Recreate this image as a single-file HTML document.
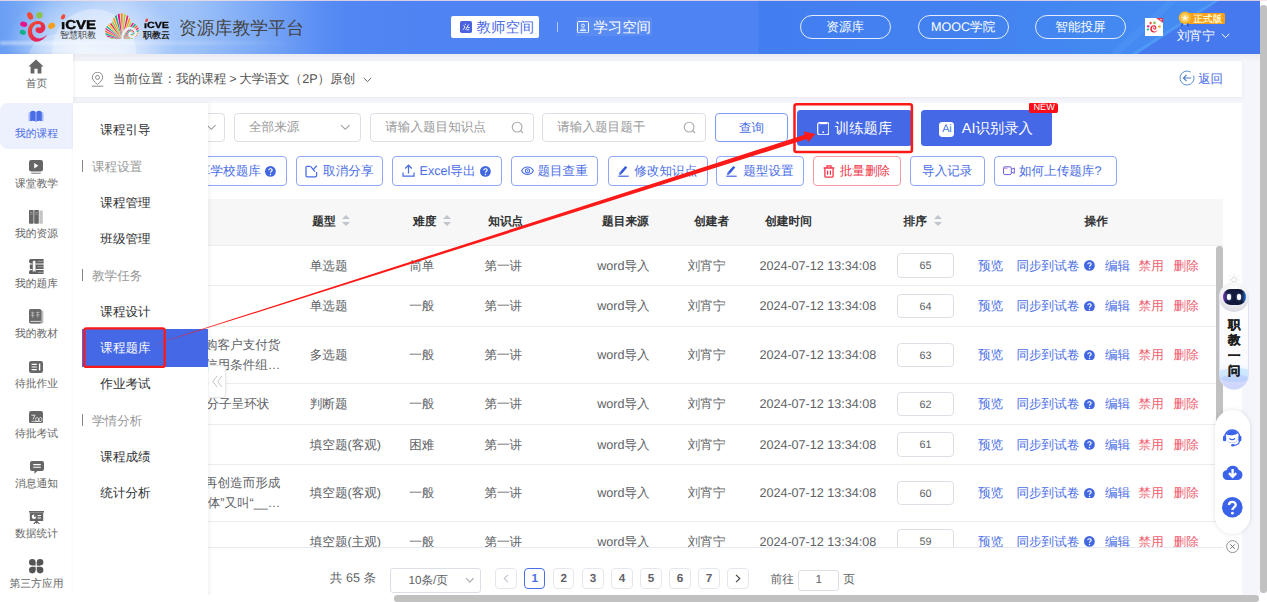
<!DOCTYPE html>
<html lang="zh"><head><meta charset="utf-8"><title>资源库教学平台</title><style>
*{box-sizing:border-box;margin:0;padding:0}
html,body{width:1267px;height:602px;overflow:hidden;background:#fff}
body{font-family:"Liberation Sans",sans-serif;font-size:12.6px;color:#606266;-webkit-font-smoothing:antialiased;text-rendering:geometricPrecision}
#root{position:relative;width:1267px;height:602px;overflow:hidden;background:#f4f6fb}
.abs{position:absolute}
.t{position:absolute;white-space:nowrap;line-height:1}
/* header */
#hdr{position:absolute;left:0;top:0;width:1260px;height:53.5px;background:radial-gradient(ellipse 85px 60px at 92px 44px,rgba(255,255,255,.62) 0,rgba(255,255,255,.45) 45%,rgba(255,255,255,0) 100%),radial-gradient(ellipse 70px 22px at 95px 56px,rgba(255,255,255,.5) 0,rgba(255,255,255,0) 100%),linear-gradient(90deg,#6a9ef4 0px,#88b6f7 50px,#accbfa 120px,#9fc3f9 190px,#7aa8f6 260px,#5a8ef3 320px,#5186f3 350px,#4f83f3 420px,#4d83f3 758px,#437ef0 759px,#4381f0 950px,#448af2 1130px,#448bf2 1260px);overflow:hidden}
.pill{position:absolute;top:15.2px;height:23.4px;width:91px;border:1px solid rgba(255,255,255,.85);border-radius:12px;color:#fff;font-size:12.6px;text-align:center;line-height:22.4px}
/* sidebar */
#side{position:absolute;left:0;top:53.5px;width:73px;height:549px;background:#fff;box-shadow:1px 0 4px rgba(0,0,0,.06)}
.si{position:absolute;left:0;width:73px;text-align:center;font-size:10.8px;color:#666;line-height:1}
/* breadcrumb */
#bc{position:absolute;left:73px;top:61px;width:1169px;height:36px;background:#fff;box-shadow:0 1px 4px rgba(0,0,0,.05)}
#panel{position:absolute;left:73px;top:103px;width:1168.6px;height:499px;background:#fff}
.inp{position:absolute;top:113px;height:28.6px;border:1px solid #dcdfe6;border-radius:4px;background:#fff;color:#999;font-size:12.6px;line-height:26px}
.btn{position:absolute;top:156px;height:30px;border:1px solid #8fa8f6;border-radius:4px;background:#fff;color:#4a6ee6;font-size:12.6px;line-height:29.4px;white-space:nowrap}
.th{position:absolute;top:214.6px;font-size:11.7px;font-weight:bold;color:#303133;line-height:13px;white-space:nowrap}
.td{position:absolute;font-size:12.6px;color:#606266;line-height:14px;white-space:nowrap}
.lk{color:#4a6ee6}.rd{color:#f25c6e}
.row{position:absolute;left:73px;width:1150.3px;border-bottom:1px solid #ebecf0}
.caret{position:absolute;width:0;height:0;border-left:4px solid transparent;border-right:4px solid transparent}
.pg{position:absolute;top:568px;width:21.4px;height:21.4px;border:1px solid #e4e7ed;border-radius:4px;background:#fff;text-align:center;font-size:11.7px;line-height:19.6px;color:#606266;font-weight:bold}
.mi{position:absolute;left:100.3px;font-size:12.6px;color:#303133;line-height:14px;white-space:nowrap}
.mg{position:absolute;left:92px;font-size:12.6px;color:#999;line-height:14px;white-space:nowrap}
.mgb{position:absolute;left:82.2px;width:1px;height:12px;background:#888}
</style></head><body><div id="root">
<div id="hdr">
<div class="abs" style="left:52px;top:9px;width:84px;height:84px;border-radius:50%;background:rgba(255,255,255,.30)"></div>
<div class="abs" style="left:28px;top:34px;width:64px;height:50px;border-radius:50%;background:rgba(255,255,255,.22)"></div>
<div class="abs" style="left:0;top:40.5px;width:300px;height:4px;background:linear-gradient(90deg,rgba(255,255,255,.38),rgba(255,255,255,.22) 50%,rgba(255,255,255,0));filter:blur(1.2px)"></div>
<svg class="abs" style="left:1060px;top:0" width="200" height="54" viewBox="0 0 200 54"><path d="M77 54 L160 0 L200 0 L200 54 Z" fill="#4679ee"/><path d="M50 54 L108 0 L118 0 L60 54 Z" fill="rgba(90,160,250,.3)"/><path d="M71 54 L155 0 L160 0 L77 54 Z" fill="rgba(90,165,250,.5)"/></svg>
<svg class="abs" style="left:0;top:0" width="180" height="54" viewBox="0 0 180 54"><defs><linearGradient id="eg" x1="0" y1="0" x2="1" y2="1"><stop offset="0" stop-color="#f4562a"/><stop offset=".55" stop-color="#e82a4c"/><stop offset="1" stop-color="#e0207a"/></linearGradient><clipPath id="sc"><circle cx="113.2" cy="31" r="8.1"/><circle cx="121.6" cy="22.6" r="9.3"/><circle cx="131" cy="30.6" r="7.9"/><rect x="111" y="30" width="22" height="9.1"/></clipPath></defs><ellipse cx="30.1" cy="15.9" rx="2.7" ry="3.9" transform="rotate(-28 30.1 15.9)" fill="#f24a38"/><circle cx="39.4" cy="15.2" r="3.2" fill="#8dc24f"/><ellipse cx="23.7" cy="24.2" rx="3.6" ry="2.6" transform="rotate(12 23.7 24.2)" fill="#e5138c"/><ellipse cx="22.8" cy="32.3" rx="3.1" ry="2.4" transform="rotate(22 22.8 32.3)" fill="#12b08a"/><ellipse cx="51.6" cy="25.8" rx="3.6" ry="2.9" transform="rotate(-28 51.6 25.8)" fill="#f5a01a"/><path d="M47.3 34.6 C44 40 39 42.5 35 41.5 C29 40 26.5 33 28.5 27.5 C30 23 34.5 20.8 38.5 21 C43 21.3 45.8 24.5 45.3 28 C44.9 31.5 41.5 33.8 38.5 33.2 C36 32.7 34.8 30.3 35.8 28.6 C36.8 27 39 27 40.5 27.8 C41.5 26 41 24.2 38.6 24 C34.5 23.8 31.8 27.5 32 31.5 C32.3 36 36 38.6 39.5 38.4 C42.5 38.2 45 36.8 47.3 34.6 Z" fill="url(#eg)"/><ellipse cx="63.1" cy="16.9" rx="1.9" ry="2.8" transform="rotate(28 63.1 16.9)" fill="#f24a38"/><g clip-path="url(#sc)"><rect x="100" y="10" width="44" height="32" fill="#f3f6fb"/><path d="M122.2 39.6 L88.28 41.97 L88.20 39.08 Z" fill="#f59a1c"/><path d="M122.2 39.6 L88.25 37.84 L88.52 34.96 Z" fill="#9ccc52"/><path d="M122.2 39.6 L88.71 33.74 L89.33 30.91 Z" fill="#e61a8a"/><path d="M122.2 39.6 L89.67 29.72 L90.62 26.99 Z" fill="#17a98a"/><path d="M122.2 39.6 L91.10 25.85 L92.38 23.26 Z" fill="#f4642c"/><path d="M122.2 39.6 L93.00 22.18 L94.59 19.76 Z" fill="#ec2f7c"/><path d="M122.2 39.6 L95.33 18.77 L97.19 16.56 Z" fill="#2bb29a"/><path d="M122.2 39.6 L98.05 15.67 L100.17 13.70 Z" fill="#f7b52a"/><path d="M122.2 39.6 L101.13 12.92 L103.47 11.22 Z" fill="#e8283c"/><path d="M122.2 39.6 L104.52 10.56 L107.05 9.16 Z" fill="#8dc24f"/><path d="M122.2 39.6 L108.17 8.63 L110.85 7.55 Z" fill="#f59a1c"/><path d="M122.2 39.6 L112.03 7.16 L114.82 6.41 Z" fill="#19a58c"/><path d="M122.2 39.6 L116.04 6.16 L118.90 5.76 Z" fill="#e5138c"/><path d="M122.2 39.6 L120.14 5.66 L123.03 5.61 Z" fill="#f28a1e"/><path d="M122.2 39.6 L124.26 5.66 L127.14 5.96 Z" fill="#a3cf58"/><path d="M122.2 39.6 L128.36 6.16 L131.18 6.81 Z" fill="#ea2a6e"/><path d="M122.2 39.6 L132.37 7.16 L135.09 8.14 Z" fill="#f59a1c"/><path d="M122.2 39.6 L136.23 8.63 L138.81 9.93 Z" fill="#9ccc52"/><path d="M122.2 39.6 L139.88 10.56 L142.28 12.17 Z" fill="#e61a8a"/><path d="M122.2 39.6 L143.27 12.92 L145.46 14.80 Z" fill="#17a98a"/><path d="M122.2 39.6 L146.35 15.67 L148.30 17.81 Z" fill="#f4642c"/><path d="M122.2 39.6 L149.07 18.77 L150.75 21.13 Z" fill="#ec2f7c"/><path d="M122.2 39.6 L151.40 22.18 L152.77 24.73 Z" fill="#2bb29a"/><path d="M122.2 39.6 L153.30 25.85 L154.35 28.54 Z" fill="#f7b52a"/><path d="M122.2 39.6 L154.73 29.72 L155.46 32.52 Z" fill="#e8283c"/><path d="M122.2 39.6 L155.69 33.74 L156.07 36.61 Z" fill="#8dc24f"/><path d="M122.2 39.6 L156.15 37.84 L156.18 40.73 Z" fill="#f59a1c"/></g><path d="M122.4 39.3 C121.6 34 125 28.2 130.2 28.2 C134.6 28.2 136.8 32 135.2 35.2 C134 37.5 130.6 37.6 129.6 35.4 C128.9 33.8 130.2 32.4 131.6 32.8" fill="none" stroke="#eaf1fc" stroke-width="2.3" stroke-linecap="round"/><ellipse cx="146.6" cy="20.3" rx="1.3" ry="1.9" transform="rotate(28 146.6 20.3)" fill="#f24a38"/></svg>
<div class="t" style="left:60.6px;top:18.7px;font-size:12.9px;font-weight:bold;color:#0a0a0a;-webkit-text-stroke:.45px #0a0a0a;transform:scaleX(1.165);transform-origin:0 0">ıCVE</div>
<div class="t" style="left:60px;top:31.4px;font-size:9px;color:#333">智慧职教</div>
<div class="t" style="left:143.6px;top:21.4px;font-size:8.9px;font-weight:bold;color:#0a0a0a;-webkit-text-stroke:.3px #0a0a0a;transform:scaleX(1.2);transform-origin:0 0">ıCVE</div>
<div class="t" style="left:143px;top:30.8px;font-size:9px;font-weight:bold;color:#222">职教云</div>
<div class="t" style="left:178.8px;top:19.6px;font-size:17.9px;color:#444">资源库教学平台</div>
<div class="abs" style="left:450.8px;top:15.9px;width:88.4px;height:22.5px;background:#fff;border-radius:2px"></div>
<svg class="abs" style="left:459.5px;top:21.3px" width="12" height="12" viewBox="0 0 12 12"><rect width="12" height="12" rx="1.8" fill="#4a62e0"/><path d="M3 8.8 L5 6 L3.6 4.3 M4.8 3.3 L6 3.3 M5.6 8.8 L8.6 3.6 M6.6 8.8 L9.2 8.8 M7.4 6.6 L9.6 6.6" stroke="#fff" stroke-width=".9" fill="none"/></svg>
<div class="t" style="left:476.6px;top:21px;font-size:14.4px;color:#4a6ce6">教师空间</div>
<div class="abs" style="left:557px;top:22px;width:1px;height:10px;background:rgba(255,255,255,.55)"></div>
<svg class="abs" style="left:576.5px;top:21px" width="12" height="12.4" viewBox="0 0 12 12.4"><rect x=".5" y=".5" width="11" height="11.4" rx="1.2" fill="none" stroke="#fff" stroke-width="1"/><circle cx="6" cy="4.6" r="1.5" fill="none" stroke="#fff" stroke-width=".9"/><path d="M3.3 9.6 C3.6 7.4 8.4 7.4 8.7 9.6 Z" fill="none" stroke="#fff" stroke-width=".9"/></svg>
<div class="abs" style="left:576px;top:17px;width:76px;height:19px;background:rgba(255,255,255,.07)"></div>
<div class="t" style="left:593.4px;top:21px;font-size:14.4px;color:#fff">学习空间</div>
<div class="pill" style="left:799.7px">资源库</div>
<div class="pill" style="left:917.6px">MOOC学院</div>
<div class="pill" style="left:1035px">智能投屏</div>
<div class="abs" style="left:1145px;top:18px;width:18px;height:18px;background:#fff"></div>
<svg class="abs" style="left:1146px;top:19.5px" width="16" height="15" viewBox="0 0 40 34">
<ellipse cx="11.5" cy="5.8" rx="2.8" ry="3.8" fill="#f04a3c"/><circle cx="21.3" cy="5.3" r="3.4" fill="#8cc152"/><ellipse cx="5.5" cy="14" rx="3.6" ry="2.7" fill="#e6178c"/><ellipse cx="4.8" cy="22.2" rx="3.2" ry="2.5" fill="#14b48c"/><ellipse cx="33.6" cy="15" rx="3.6" ry="2.9" fill="#f5a01e"/>
<path d="M29 23 C26 29.5 16 32.5 12.2 26 C8.2 19 13 11.3 19.5 11.5 C25 11.7 27.5 16.5 25.3 20.2 C23.5 23.3 18.6 23 17.8 19.8 C17.2 17.4 19.3 15.8 21 16.6 C19 17.6 19.7 20.5 21.8 19.8 C24 19 23 14.6 19.3 14.6 C15 14.6 13.2 20 15.8 24 C18.8 28.6 25.5 27 29 23 Z" fill="#e8283c"/></svg>
<svg class="abs" style="left:1156px;top:18px" width="7" height="5" viewBox="0 0 7 5"><path d="M0 0 L7 0 L7 5 Z" fill="#e0364f"/><circle cx="5" cy="1.7" r=".7" fill="#fff"/></svg>
<div class="abs" style="left:1186px;top:13.3px;width:39px;height:10.5px;background:#f7a11a;border-radius:1.5px"></div>
<div class="t" style="left:1193.4px;top:13.9px;font-size:9.4px;color:#fff5c8;font-weight:bold;letter-spacing:.3px">正式版</div>
<svg class="abs" style="left:1177.5px;top:10.5px" width="14" height="16" viewBox="0 0 14 16"><path d="M4 10.5 L3 15.8 L7 13.8 L11 15.8 L10 10.5 Z" fill="#2458d6"/><path d="M5.6 11 L5.2 14.6 L7 13.7 L8.8 14.6 L8.4 11 Z" fill="#a8cdf8"/><circle cx="7" cy="6.8" r="6.2" fill="#f9b62c"/><circle cx="7" cy="6.8" r="4.2" fill="#fbd065"/><path d="M7 3.8 L7.9 5.8 L10 6 L8.4 7.4 L8.9 9.5 L7 8.4 L5.1 9.5 L5.6 7.4 L4 6 L6.1 5.8 Z" fill="#fff6d8"/></svg>
<div class="t" style="left:1177px;top:30.2px;font-size:12.6px;color:#fff">刘宵宁</div>
<svg class="abs" style="left:1220.5px;top:33px" width="9" height="6" viewBox="0 0 9 6"><path d="M.8 1 L4.5 4.6 L8.2 1" fill="none" stroke="#fff" stroke-width="1"/></svg>
</div>
<div class="abs" style="left:0;top:53.5px;width:1260px;height:8px;background:linear-gradient(180deg,rgba(0,0,0,.045),rgba(0,0,0,0))"></div>
<div id="bc"></div>
<svg class="abs" style="left:91px;top:71.5px" width="13" height="15" viewBox="0 0 13 15"><path d="M6.5 12.6 C3.6 9.6 1.3 7.8 1.3 5.4 A5.2 5.2 0 0 1 11.7 5.4 C11.7 7.8 9.4 9.6 6.5 12.6 Z" fill="none" stroke="#8a8a8a" stroke-width="1"/><circle cx="6.5" cy="5.4" r="2" fill="none" stroke="#8a8a8a" stroke-width="1"/><path d="M.8 14.2 L12.2 14.2" stroke="#8a8a8a" stroke-width="1"/></svg>
<div class="t" style="left:113px;top:73px;font-size:12.6px;color:#555">当前位置：我的课程<span style="padding:0 2.5px 0 3px">&gt;</span>大学语文（2P）原创</div>
<svg class="abs" style="left:363px;top:77px" width="9" height="6" viewBox="0 0 9 6"><path d="M.8 1 L4.5 4.6 L8.2 1" fill="none" stroke="#666" stroke-width="1"/></svg>
<svg class="abs" style="left:1178.6px;top:70.2px" width="16" height="16" viewBox="0 0 16 16"><path d="M11.6 2 A7 7 0 1 0 14.6 5.6" fill="none" stroke="#5a8fd0" stroke-width="1"/><path d="M12.2 8 L4.6 8 M7.6 4.8 L4.4 8 L7.6 11.2" fill="none" stroke="#4f7fc8" stroke-width="1.1"/></svg>
<div class="t" style="left:1198.2px;top:73.2px;font-size:12.4px;color:#4a6ee6">返回</div>
<div id="panel"></div>
<div class="inp" style="left:120px;width:104.5px"></div>
<svg class="abs" style="left:206.4px;top:123.8px" width="10.6" height="7" viewBox="0 0 9 6"><path d="M.8 1 L4.5 4.6 L8.2 1" fill="none" stroke="#9a9a9a" stroke-width=".9"/></svg>
<div class="inp" style="left:234px;width:127px;padding-left:14px">全部来源</div>
<svg class="abs" style="left:340px;top:123.8px" width="10.6" height="7" viewBox="0 0 9 6"><path d="M.8 1 L4.5 4.6 L8.2 1" fill="none" stroke="#9a9a9a" stroke-width=".9"/></svg>
<div class="inp" style="left:370.2px;width:163.6px;padding-left:14px">请输入题目知识点</div>
<div class="inp" style="left:542.2px;width:163.6px;padding-left:14px">请输入题目题干</div>
<svg class="abs" style="left:510.9px;top:120.6px" width="13.6" height="13.6" viewBox="0 0 12 12"><circle cx="5.4" cy="5.4" r="4.3" fill="none" stroke="#aaa" stroke-width="1"/><path d="M8.6 8.6 L10.6 10.6" stroke="#aaa" stroke-width="1"/></svg>
<svg class="abs" style="left:682.9px;top:120.6px" width="13.6" height="13.6" viewBox="0 0 12 12"><circle cx="5.4" cy="5.4" r="4.3" fill="none" stroke="#aaa" stroke-width="1"/><path d="M8.6 8.6 L10.6 10.6" stroke="#aaa" stroke-width="1"/></svg>
<div class="btn" style="top:113px;left:715px;width:73px;text-align:center;height:28.6px;line-height:28.8px;border-color:#7d9af5">查询</div>
<div class="abs" style="left:796.5px;top:109.5px;width:115px;height:36.5px;background:#4568e6;border-radius:3.5px"></div>
<svg class="abs" style="left:816.5px;top:121.6px" width="12.5" height="13.5" viewBox="0 0 12.5 13.5"><rect x=".7" y=".7" width="11.1" height="12.1" rx="2" fill="none" stroke="#fff" stroke-width="1.2"/><path d="M2.6 1.3 L9.9 1.3" stroke="#fff" stroke-width="1.8"/><circle cx="6.25" cy="10.2" r=".9" fill="#fff"/></svg>
<div class="t" style="left:834.8px;top:121.6px;font-size:14.4px;color:#fff">训练题库</div>
<div class="abs" style="left:920.7px;top:109.5px;width:131.3px;height:36.5px;background:#4568e6;border-radius:3.5px"></div>
<div class="abs" style="left:939px;top:122px;width:14.5px;height:14.7px;background:#fff;border-radius:3.4px"></div>
<div class="t" style="left:942.2px;top:124.1px;font-size:10.9px;color:#3f78e6;letter-spacing:-.3px">Ai</div>
<div class="t" style="left:961.8px;top:121.6px;font-size:14.4px;color:#fff">AI识别录入</div>
<div class="abs" style="left:1029.4px;top:102.8px;width:29px;height:10.6px;background:#fb0d17;border-radius:1px 2.6px 2.6px 2.6px"></div>
<div class="t" style="left:1033.4px;top:103.3px;font-size:9.2px;color:#fff;letter-spacing:0">NEW</div>
<div class="btn" style="left:160px;width:126.6px;padding-left:36.9px">享学校题库<svg style="display:inline-block;vertical-align:-1.6px;margin-left:4.5px" width="10.8" height="10.8" viewBox="0 0 12 12"><circle cx="6" cy="6" r="6" fill="#4166e2"/><path d="M4.2 4.7 C4.2 2.5 7.9 2.5 7.9 4.6 C7.9 6 6.1 5.9 6.1 7.4" fill="none" stroke="#fff" stroke-width="1.3"/><circle cx="6.1" cy="9.4" r=".85" fill="#fff"/></svg></div>
<div class="btn" style="left:295.5px;width:87.5px;padding-left:26.6px">取消分享</div>
<svg class="abs" style="left:304.8px;top:164.6px" width="13" height="13" viewBox="0 0 13 13"><path d="M5.4 1.3 L2.2 1.3 Q1 1.3 1 2.5 L1 10.6 Q1 11.8 2.2 11.8 L10.4 11.8 Q11.6 11.8 11.6 10.6 L11.6 7" fill="none" stroke="#4a6ee6" stroke-width="1.3"/><path d="M5.6 1.4 L10 6.6 M11.8 .8 L8.4 4.4" fill="none" stroke="#4a6ee6" stroke-width="1.3"/></svg>
<div class="btn" style="left:392.4px;width:109.4px;padding-left:26.2px">Excel导出<svg style="display:inline-block;vertical-align:-1.6px;margin-left:4.5px" width="10.8" height="10.8" viewBox="0 0 12 12"><circle cx="6" cy="6" r="6" fill="#4166e2"/><path d="M4.2 4.7 C4.2 2.5 7.9 2.5 7.9 4.6 C7.9 6 6.1 5.9 6.1 7.4" fill="none" stroke="#fff" stroke-width="1.3"/><circle cx="6.1" cy="9.4" r=".85" fill="#fff"/></svg></div>
<svg class="abs" style="left:401.6px;top:164px" width="13" height="13.5" viewBox="0 0 13 13.5"><path d="M6.5 9.4 L6.5 1.4 M3.2 4.5 L6.5 1.2 L9.8 4.5" fill="none" stroke="#4a6ee6" stroke-width="1.25"/><path d="M1 8.4 L1 12.2 L12 12.2 L12 8.4" fill="none" stroke="#4a6ee6" stroke-width="1.25"/></svg>
<div class="btn" style="left:510.6px;width:87.9px;padding-left:25.8px">题目查重</div>
<svg class="abs" style="left:520.6px;top:166.2px" width="13" height="9.6" viewBox="0 0 13 9.6"><path d="M.6 4.8 C3.2 -.2 9.8 -.2 12.4 4.8 C9.8 9.8 3.2 9.8 .6 4.8 Z" fill="none" stroke="#4a6ee6" stroke-width="1.1"/><circle cx="6.5" cy="4.8" r="2.1" fill="none" stroke="#4a6ee6" stroke-width="1.1"/><circle cx="6.5" cy="4.8" r=".7" fill="#4a6ee6"/></svg>
<div class="btn" style="left:607.8px;width:99.8px;padding-left:25.4px">修改知识点</div>
<svg class="abs" style="left:617.5px;top:165.2px" width="11" height="11.8" viewBox="0 0 11 11.8"><path d="M2.9 7.9 L8.3 1.7" stroke="#3558e0" stroke-width="2.5" fill="none"/><path d="M1.1 9.9 L1.6 6.9 L4.1 8.9 Z" fill="#3558e0"/><path d="M.3 11.2 L10.7 11.2" stroke="#3558e0" stroke-width="1.1"/></svg>
<div class="btn" style="left:716.4px;width:87.9px;padding-left:25.8px">题型设置</div>
<svg class="abs" style="left:726.3px;top:165.2px" width="11" height="11.8" viewBox="0 0 11 11.8"><path d="M2.9 7.9 L8.3 1.7" stroke="#3558e0" stroke-width="2.5" fill="none"/><path d="M1.1 9.9 L1.6 6.9 L4.1 8.9 Z" fill="#3558e0"/><path d="M.3 11.2 L10.7 11.2" stroke="#3558e0" stroke-width="1.1"/></svg>
<div class="btn" style="left:813.3px;width:87.4px;padding-left:25.4px;border-color:#f59aa3;color:#f0364a">批量删除</div>
<svg class="abs" style="left:822.8px;top:164.6px" width="12" height="13" viewBox="0 0 12 13"><path d="M.6 3 L11.4 3 M4 2.6 L4 .9 L8 .9 L8 2.6" fill="none" stroke="#f0364a" stroke-width="1.3"/><path d="M1.9 3.2 L1.9 11 Q1.9 12.2 3.1 12.2 L8.9 12.2 Q10.1 12.2 10.1 11 L10.1 3.2" fill="none" stroke="#f0364a" stroke-width="1.3"/><path d="M4.6 5.6 L4.6 9.8 M7.4 5.6 L7.4 9.8" stroke="#f0364a" stroke-width="1.2"/></svg>
<div class="btn" style="left:910px;width:74.5px;text-align:center">导入记录</div>
<div class="btn" style="left:993.7px;width:123px;padding-left:24.2px">如何上传题库?</div>
<svg class="abs" style="left:1002.6px;top:166.4px" width="12" height="9.4" viewBox="0 0 12 9.4"><rect x=".5" y=".8" width="7.8" height="7.8" rx="1.4" fill="none" stroke="#6a5ce0" stroke-width="1"/><path d="M8.5 3.3 L11.3 2 L11.3 7.4 L8.5 6.1" fill="none" stroke="#6a5ce0" stroke-width="1"/><path d="M1.2 2.2 L4.4 2.2" stroke="#c46ad8" stroke-width="1"/></svg>
<div class="abs" style="left:73px;top:199px;width:1150.3px;height:47px;background:#f7f7f7;border-bottom:1px solid #eeeeef"></div>
<div class="th" style="left:312.2px">题型</div>
<div class="th" style="left:413px">难度</div>
<div class="th" style="left:488.2px">知识点</div>
<div class="th" style="left:602px">题目来源</div>
<div class="th" style="left:694.1px">创建者</div>
<div class="th" style="left:765.1px">创建时间</div>
<div class="th" style="left:903.6px">排序</div>
<div class="th" style="left:1084.6px">操作</div>
<div class="caret" style="left:341.6px;top:215.2px;border-bottom:4.6px solid #c0c4cc"></div><div class="caret" style="left:341.6px;top:222.2px;border-top:4.6px solid #c0c4cc"></div>
<div class="caret" style="left:442.6px;top:215.2px;border-bottom:4.6px solid #c0c4cc"></div><div class="caret" style="left:442.6px;top:222.2px;border-top:4.6px solid #c0c4cc"></div>
<div class="caret" style="left:933.7px;top:215.2px;border-bottom:4.6px solid #c0c4cc"></div><div class="caret" style="left:933.7px;top:222.2px;border-top:4.6px solid #c0c4cc"></div>
<div class="abs" style="left:73px;top:246px;width:1150.3px;height:301px;overflow:hidden">
<div class="abs" style="left:-73px;top:-246px;width:1267px;height:602px">
<div class="row" style="top:246px;height:40px"></div>
<div class="td" style="left:309.7px;top:258.7px">单选题</div>
<div class="td" style="left:409.2px;top:258.7px">简单</div>
<div class="td" style="left:484.4px;top:258.7px">第一讲</div>
<div class="td" style="left:597.2px;top:258.7px">word导入</div>
<div class="td" style="left:687.8px;top:258.7px">刘宵宁</div>
<div class="td" style="left:759.4px;top:258.7px">2024-07-12 13:34:08</div>
<div class="abs" style="left:897px;top:253.2px;width:57px;height:24.6px;border:1px solid #dcdfe6;border-radius:4px;text-align:center;font-size:10.8px;line-height:24.2px;color:#606266">65</div>
<div class="td lk" style="left:978px;top:258.7px">预览</div>
<div class="td lk" style="left:1016.4px;top:258.7px">同步到试卷<svg style="display:inline-block;vertical-align:-1.2px;margin-left:4.6px" width="10.8" height="10.8" viewBox="0 0 12 12"><circle cx="6" cy="6" r="6" fill="#4166e2"/><path d="M4.2 4.7 C4.2 2.5 7.9 2.5 7.9 4.6 C7.9 6 6.1 5.9 6.1 7.4" fill="none" stroke="#fff" stroke-width="1.3"/><circle cx="6.1" cy="9.4" r=".85" fill="#fff"/></svg></div>
<div class="td lk" style="left:1105px;top:258.7px">编辑</div>
<div class="td rd" style="left:1138.6px;top:258.7px">禁用</div>
<div class="td rd" style="left:1173.6px;top:258.7px">删除</div>
<div class="row" style="top:286px;height:41px"></div>
<div class="td" style="left:309.7px;top:299.2px">单选题</div>
<div class="td" style="left:409.2px;top:299.2px">一般</div>
<div class="td" style="left:484.4px;top:299.2px">第一讲</div>
<div class="td" style="left:597.2px;top:299.2px">word导入</div>
<div class="td" style="left:687.8px;top:299.2px">刘宵宁</div>
<div class="td" style="left:759.4px;top:299.2px">2024-07-12 13:34:08</div>
<div class="abs" style="left:897px;top:293.7px;width:57px;height:24.6px;border:1px solid #dcdfe6;border-radius:4px;text-align:center;font-size:10.8px;line-height:24.2px;color:#606266">64</div>
<div class="td lk" style="left:978px;top:299.2px">预览</div>
<div class="td lk" style="left:1016.4px;top:299.2px">同步到试卷<svg style="display:inline-block;vertical-align:-1.2px;margin-left:4.6px" width="10.8" height="10.8" viewBox="0 0 12 12"><circle cx="6" cy="6" r="6" fill="#4166e2"/><path d="M4.2 4.7 C4.2 2.5 7.9 2.5 7.9 4.6 C7.9 6 6.1 5.9 6.1 7.4" fill="none" stroke="#fff" stroke-width="1.3"/><circle cx="6.1" cy="9.4" r=".85" fill="#fff"/></svg></div>
<div class="td lk" style="left:1105px;top:299.2px">编辑</div>
<div class="td rd" style="left:1138.6px;top:299.2px">禁用</div>
<div class="td rd" style="left:1173.6px;top:299.2px">删除</div>
<div class="row" style="top:327px;height:57px"></div>
<div class="td" style="left:309.7px;top:348.2px">多选题</div>
<div class="td" style="left:409.2px;top:348.2px">一般</div>
<div class="td" style="left:484.4px;top:348.2px">第一讲</div>
<div class="td" style="left:597.2px;top:348.2px">word导入</div>
<div class="td" style="left:687.8px;top:348.2px">刘宵宁</div>
<div class="td" style="left:759.4px;top:348.2px">2024-07-12 13:34:08</div>
<div class="abs" style="left:897px;top:342.7px;width:57px;height:24.6px;border:1px solid #dcdfe6;border-radius:4px;text-align:center;font-size:10.8px;line-height:24.2px;color:#606266">63</div>
<div class="td lk" style="left:978px;top:348.2px">预览</div>
<div class="td lk" style="left:1016.4px;top:348.2px">同步到试卷<svg style="display:inline-block;vertical-align:-1.2px;margin-left:4.6px" width="10.8" height="10.8" viewBox="0 0 12 12"><circle cx="6" cy="6" r="6" fill="#4166e2"/><path d="M4.2 4.7 C4.2 2.5 7.9 2.5 7.9 4.6 C7.9 6 6.1 5.9 6.1 7.4" fill="none" stroke="#fff" stroke-width="1.3"/><circle cx="6.1" cy="9.4" r=".85" fill="#fff"/></svg></div>
<div class="td lk" style="left:1105px;top:348.2px">编辑</div>
<div class="td rd" style="left:1138.6px;top:348.2px">禁用</div>
<div class="td rd" style="left:1173.6px;top:348.2px">删除</div>
<div class="td" style="right:986.6px;top:338.3px;text-align:right">进口商为促使采购客户支付货</div>
<div class="td" style="right:986.6px;top:358.09999999999997px;text-align:right">款提供的优惠信用条件组…</div>
<div class="row" style="top:384px;height:41px"></div>
<div class="td" style="left:309.7px;top:397.2px">判断题</div>
<div class="td" style="left:409.2px;top:397.2px">一般</div>
<div class="td" style="left:484.4px;top:397.2px">第一讲</div>
<div class="td" style="left:597.2px;top:397.2px">word导入</div>
<div class="td" style="left:687.8px;top:397.2px">刘宵宁</div>
<div class="td" style="left:759.4px;top:397.2px">2024-07-12 13:34:08</div>
<div class="abs" style="left:897px;top:391.7px;width:57px;height:24.6px;border:1px solid #dcdfe6;border-radius:4px;text-align:center;font-size:10.8px;line-height:24.2px;color:#606266">62</div>
<div class="td lk" style="left:978px;top:397.2px">预览</div>
<div class="td lk" style="left:1016.4px;top:397.2px">同步到试卷<svg style="display:inline-block;vertical-align:-1.2px;margin-left:4.6px" width="10.8" height="10.8" viewBox="0 0 12 12"><circle cx="6" cy="6" r="6" fill="#4166e2"/><path d="M4.2 4.7 C4.2 2.5 7.9 2.5 7.9 4.6 C7.9 6 6.1 5.9 6.1 7.4" fill="none" stroke="#fff" stroke-width="1.3"/><circle cx="6.1" cy="9.4" r=".85" fill="#fff"/></svg></div>
<div class="td lk" style="left:1105px;top:397.2px">编辑</div>
<div class="td rd" style="left:1138.6px;top:397.2px">禁用</div>
<div class="td rd" style="left:1173.6px;top:397.2px">删除</div>
<div class="td" style="right:997.6px;top:397.2px;text-align:right">苯分子呈环状</div>
<div class="row" style="top:425px;height:40px"></div>
<div class="td" style="left:309.7px;top:437.7px">填空题(客观)</div>
<div class="td" style="left:409.2px;top:437.7px">困难</div>
<div class="td" style="left:484.4px;top:437.7px">第一讲</div>
<div class="td" style="left:597.2px;top:437.7px">word导入</div>
<div class="td" style="left:687.8px;top:437.7px">刘宵宁</div>
<div class="td" style="left:759.4px;top:437.7px">2024-07-12 13:34:08</div>
<div class="abs" style="left:897px;top:432.2px;width:57px;height:24.6px;border:1px solid #dcdfe6;border-radius:4px;text-align:center;font-size:10.8px;line-height:24.2px;color:#606266">61</div>
<div class="td lk" style="left:978px;top:437.7px">预览</div>
<div class="td lk" style="left:1016.4px;top:437.7px">同步到试卷<svg style="display:inline-block;vertical-align:-1.2px;margin-left:4.6px" width="10.8" height="10.8" viewBox="0 0 12 12"><circle cx="6" cy="6" r="6" fill="#4166e2"/><path d="M4.2 4.7 C4.2 2.5 7.9 2.5 7.9 4.6 C7.9 6 6.1 5.9 6.1 7.4" fill="none" stroke="#fff" stroke-width="1.3"/><circle cx="6.1" cy="9.4" r=".85" fill="#fff"/></svg></div>
<div class="td lk" style="left:1105px;top:437.7px">编辑</div>
<div class="td rd" style="left:1138.6px;top:437.7px">禁用</div>
<div class="td rd" style="left:1173.6px;top:437.7px">删除</div>
<div class="row" style="top:465px;height:57px"></div>
<div class="td" style="left:309.7px;top:486.2px">填空题(客观)</div>
<div class="td" style="left:409.2px;top:486.2px">一般</div>
<div class="td" style="left:484.4px;top:486.2px">第一讲</div>
<div class="td" style="left:597.2px;top:486.2px">word导入</div>
<div class="td" style="left:687.8px;top:486.2px">刘宵宁</div>
<div class="td" style="left:759.4px;top:486.2px">2024-07-12 13:34:08</div>
<div class="abs" style="left:897px;top:480.7px;width:57px;height:24.6px;border:1px solid #dcdfe6;border-radius:4px;text-align:center;font-size:10.8px;line-height:24.2px;color:#606266">60</div>
<div class="td lk" style="left:978px;top:486.2px">预览</div>
<div class="td lk" style="left:1016.4px;top:486.2px">同步到试卷<svg style="display:inline-block;vertical-align:-1.2px;margin-left:4.6px" width="10.8" height="10.8" viewBox="0 0 12 12"><circle cx="6" cy="6" r="6" fill="#4166e2"/><path d="M4.2 4.7 C4.2 2.5 7.9 2.5 7.9 4.6 C7.9 6 6.1 5.9 6.1 7.4" fill="none" stroke="#fff" stroke-width="1.3"/><circle cx="6.1" cy="9.4" r=".85" fill="#fff"/></svg></div>
<div class="td lk" style="left:1105px;top:486.2px">编辑</div>
<div class="td rd" style="left:1138.6px;top:486.2px">禁用</div>
<div class="td rd" style="left:1173.6px;top:486.2px">删除</div>
<div class="td" style="right:986.6px;top:476.3px;text-align:right">文学是经过再创造而形成</div>
<div class="td" style="right:986.6px;top:496.09999999999997px;text-align:right">的，“文体”又叫“__…</div>
<div class="row" style="top:522px;height:40px"></div>
<div class="td" style="left:309.7px;top:534.6999999999999px">填空题(主观)</div>
<div class="td" style="left:409.2px;top:534.6999999999999px">一般</div>
<div class="td" style="left:484.4px;top:534.6999999999999px">第一讲</div>
<div class="td" style="left:597.2px;top:534.6999999999999px">word导入</div>
<div class="td" style="left:687.8px;top:534.6999999999999px">刘宵宁</div>
<div class="td" style="left:759.4px;top:534.6999999999999px">2024-07-12 13:34:08</div>
<div class="abs" style="left:897px;top:529.1999999999999px;width:57px;height:24.6px;border:1px solid #dcdfe6;border-radius:4px;text-align:center;font-size:10.8px;line-height:24.2px;color:#606266">59</div>
<div class="td lk" style="left:978px;top:534.6999999999999px">预览</div>
<div class="td lk" style="left:1016.4px;top:534.6999999999999px">同步到试卷<svg style="display:inline-block;vertical-align:-1.2px;margin-left:4.6px" width="10.8" height="10.8" viewBox="0 0 12 12"><circle cx="6" cy="6" r="6" fill="#4166e2"/><path d="M4.2 4.7 C4.2 2.5 7.9 2.5 7.9 4.6 C7.9 6 6.1 5.9 6.1 7.4" fill="none" stroke="#fff" stroke-width="1.3"/><circle cx="6.1" cy="9.4" r=".85" fill="#fff"/></svg></div>
<div class="td lk" style="left:1105px;top:534.6999999999999px">编辑</div>
<div class="td rd" style="left:1138.6px;top:534.6999999999999px">禁用</div>
<div class="td rd" style="left:1173.6px;top:534.6999999999999px">删除</div>
</div></div>
<div class="abs" style="left:73px;top:547px;width:1150.3px;height:1px;background:#e6e9f0"></div>
<div class="abs" style="left:1216.3px;top:245.6px;width:6.7px;height:200px;background:#c1c1c1;border-radius:3.4px"></div>
<div class="t" style="left:329.8px;top:571.6px;font-size:12.6px;color:#606266">共 65 条</div>
<div class="abs" style="left:390.4px;top:568px;width:90.2px;height:25.2px;border:1px solid #dcdfe6;border-radius:3px;font-size:11.7px;line-height:24.6px;color:#606266;padding-left:17px;background:#fff">10条/页</div>
<svg class="abs" style="left:464.6px;top:577px" width="9.6" height="6.6" viewBox="0 0 8 5.5"><path d="M.8 1 L4 4.2 L7.2 1" fill="none" stroke="#b0b3ba" stroke-width="1"/></svg>
<div class="pg" style="left:495.2px"></div>
<svg class="abs" style="left:502.6px;top:574.2px" width="6" height="9" viewBox="0 0 6 9"><path d="M5 .8 L1.2 4.5 L5 8.2" fill="none" stroke="#c0c4cc" stroke-width="1.1"/></svg>
<div class="pg" style="left:524.1px;border-color:#4a6ee6;color:#4a6ee6">1</div>
<div class="pg" style="left:553.1px">2</div>
<div class="pg" style="left:582.2px">3</div>
<div class="pg" style="left:611.2px">4</div>
<div class="pg" style="left:640.2px">5</div>
<div class="pg" style="left:669.2px">6</div>
<div class="pg" style="left:698.3px">7</div>
<div class="pg" style="left:727.3px"></div>
<svg class="abs" style="left:735.4px;top:574.2px" width="6" height="9" viewBox="0 0 6 9"><path d="M1 .8 L4.8 4.5 L1 8.2" fill="none" stroke="#444" stroke-width="1.1"/></svg>
<div class="t" style="left:770.5px;top:574px;font-size:11.7px;color:#606266">前往</div>
<div class="abs" style="left:798.2px;top:569.6px;width:41px;height:21.8px;border:1px solid #dcdfe6;border-radius:3px;text-align:center;font-size:11.7px;line-height:18.6px;color:#606266;background:#fff">1</div>
<div class="t" style="left:843.2px;top:574px;font-size:11.7px;color:#606266">页</div>
<div id="side"></div>
<div class="abs" style="left:0;top:103px;width:73px;height:46px;background:#edf0fd;border-radius:8px 0 0 8px"></div>
<div class="si" style="top:78.8px;color:#666">首页</div>
<div class="si" style="top:128.8px;color:#4a6ee6">我的课程</div>
<div class="si" style="top:178.9px;color:#666">课堂教学</div>
<div class="si" style="top:228.9px;color:#666">我的资源</div>
<div class="si" style="top:279.0px;color:#666">我的题库</div>
<div class="si" style="top:329.1px;color:#666">我的教材</div>
<div class="si" style="top:379.1px;color:#666">待批作业</div>
<div class="si" style="top:429.1px;color:#666">待批考试</div>
<div class="si" style="top:479.2px;color:#666">消息通知</div>
<div class="si" style="top:529.2px;color:#666">数据统计</div>
<div class="si" style="top:579.3px;color:#666">第三方应用</div>
<svg class="abs" style="left:28.4px;top:59.3px" width="16" height="15" viewBox="0 0 16 15"><path d="M8 .4 L15.6 7.6 L13.4 7.6 L13.4 14.6 L9.6 14.6 L9.6 9.8 L6.4 9.8 L6.4 14.6 L2.6 14.6 L2.6 7.6 L.4 7.6 Z" fill="#666"/></svg>
<svg class="abs" style="left:28.3px;top:110.4px" width="16" height="12" viewBox="0 0 16 12"><path d="M.5 2.6 L2.6 2.2 L2.6 10.8 L.5 11.2 Z M15.5 2.6 L13.4 2.2 L13.4 10.8 L15.5 11.2 Z" fill="#a9b9f5"/><path d="M2.2 1.9 C4 .2 6.2 .3 7.7 1.9 L7.7 11.8 C6.2 10.5 4 10.3 2.2 11.2 Z" fill="#4a6ee6"/><path d="M13.8 1.9 C12 .2 9.8 .3 8.3 1.9 L8.3 11.8 C9.8 10.5 12 10.3 13.8 11.2 Z" fill="#4a6ee6"/></svg>
<svg class="abs" style="left:29.2px;top:160.3px" width="14" height="14" viewBox="0 0 14 14"><rect x="0" y="0" width="14" height="11.4" rx="2.2" fill="#666"/><path d="M5.2 3 L9.4 5.7 L5.2 8.4 Z" fill="#fff"/><path d="M2.2 13.2 L11.8 13.2" stroke="#777" stroke-width="1"/></svg>
<svg class="abs" style="left:29.2px;top:210px" width="14" height="14" viewBox="0 0 14 14"><rect x="0" y="0" width="4.6" height="13.8" rx=".8" fill="#666"/><rect x="5.2" y="0" width="4.6" height="13.8" rx=".8" fill="#666"/><rect x="10.4" y=".4" width="3.4" height="13.4" rx=".6" fill="#c4c4c4"/><path d="M1 2.4 L3.6 2.4 M1 4.2 L3.6 4.2 M6.2 2.4 L8.8 2.4 M6.2 4.2 L8.8 4.2" stroke="#aaa" stroke-width=".7"/></svg>
<svg class="abs" style="left:28.6px;top:258.9px" width="15" height="15.6" viewBox="0 0 15 15.6"><path d="M2 0 L14.6 0 L14.6 4.6 L2 4.6 Q0 4.6 0 2.3 Q0 0 2 0 Z M2 11 L14.6 11 L14.6 15.6 L2 15.6 Q0 15.6 0 13.3 Q0 11 2 11 Z M.8 5.5 L14.6 5.5 L14.6 10.1 L.8 10.1 Z" fill="#5f5f5f"/><path d="M3.6 2.6 Q3.6 1.5 5.2 1.5 Q6.8 1.5 6.8 2.6 L6.8 13.6 L5.2 12.1 L3.6 13.6 Z" fill="#fff" stroke="#5f5f5f" stroke-width=".5"/><path d="M8.6 2.3 L14.6 2.3 M8.6 7.8 L14.6 7.8 M8.6 13.3 L14.6 13.3" stroke="#e6e6e6" stroke-width=".55"/></svg>
<svg class="abs" style="left:29.2px;top:309.2px" width="14.4" height="15" viewBox="0 0 14.4 15"><rect x="1.4" y="1.6" width="13" height="13" rx="1.4" fill="#bdbdbd"/><rect x="0" y="0" width="12.4" height="14.4" rx="1.6" fill="#6a6a6a"/><path d="M1.4 12.4 L12 12.4" stroke="#ddd" stroke-width="1"/><path d="M2 4 L5.4 4 M3.7 2.6 L3.7 8.6 M2 6.4 L5.4 6.4 M7 3.4 L10.6 3.4 M8.8 3.4 L8.8 8.6 M7 6 L10.6 6" stroke="#c8c8c8" stroke-width=".7"/></svg>
<svg class="abs" style="left:29.4px;top:360.8px" width="14" height="12" viewBox="0 0 14 12"><rect width="14" height="12" rx="2.2" fill="#666"/><path d="M2.6 3.4 L7.8 3.4 M2.6 6 L7.8 6 M2.6 8.6 L7.8 8.6" stroke="#fff" stroke-width="1.2"/><path d="M10.6 2.6 L10.6 9.4" stroke="#fff" stroke-width="1.4"/></svg>
<svg class="abs" style="left:29.4px;top:410.6px" width="14" height="12.4" viewBox="0 0 14 12.4"><rect width="14" height="12.4" rx="2.2" fill="#666"/><path d="M2.4 4.2 L6 4.2 L4 8.4 M6.6 8.6 A1.5 2 0 1 0 6.6 8.5 M10 8.6 A1.5 2 0 1 0 10 8.5" stroke="#fff" stroke-width=".8" fill="none"/><path d="M2.4 10.4 L11.6 10.4" stroke="#fff" stroke-width=".7"/></svg>
<svg class="abs" style="left:29.6px;top:460.6px" width="14" height="13" viewBox="0 0 14 13"><path d="M2 0 L12 0 Q14 0 14 2 L14 8 Q14 10 12 10 L7.4 10 L4.4 12.8 L4.4 10 L2 10 Q0 10 0 8 L0 2 Q0 0 2 0 Z" fill="#666"/><path d="M3.2 3.6 L10.8 3.6 M3.2 6.2 L10.8 6.2" stroke="#fff" stroke-width="1.1"/></svg>
<svg class="abs" style="left:29px;top:510.6px" width="15" height="13.4" viewBox="0 0 15 13.4"><rect x="0" y="0" width="15" height="1.6" fill="#666"/><rect x=".8" y="1.6" width="13.4" height="8.4" fill="#666"/><circle cx="5" cy="5.8" r="2.2" fill="#fff"/><path d="M5 5.8 L5 3.6 A2.2 2.2 0 0 1 7.2 5.8 Z" fill="#666"/><path d="M8.6 4.6 L12 4.6 M8.6 7 L12 7" stroke="#fff" stroke-width="1"/><path d="M7.5 10 L4.6 13.2 M7.5 10 L10.4 13.2 M7.5 10 L7.5 12.6" stroke="#666" stroke-width="1.1"/></svg>
<svg class="abs" style="left:29.4px;top:559.4px" width="14.4" height="14.4" viewBox="0 0 14.4 14.4"><path d="M3.3 0 A3.3 3.3 0 0 1 6.6 3.3 L6.6 6.6 L3.3 6.6 A3.3 3.3 0 0 1 3.3 0 Z" fill="#555"/><circle cx="11.1" cy="3.3" r="3.3" fill="#555"/><circle cx="3.3" cy="11.1" r="3.3" fill="#555"/><circle cx="11.1" cy="11.1" r="3.3" fill="#555"/><rect x="7.8" y="3.3" width="3.3" height="3.3" fill="#555"/><rect x="3.3" y="7.8" width="3.3" height="3.3" fill="#555"/><rect x="7.8" y="7.8" width="3.3" height="3.3" fill="#555"/></svg>
<div class="abs" style="left:73px;top:102.5px;width:135.4px;height:500px;background:#fff;box-shadow:1px 0 4px rgba(0,0,0,.07)"></div>
<div class="abs" style="left:82px;top:329.4px;width:126.4px;height:37.2px;background:#4568e6"></div>
<div class="mi" style="top:123.3px">课程引导</div>
<div class="mgb" style="top:160.3px"></div>
<div class="mg" style="top:159.6px">课程设置</div>
<div class="mi" style="top:195.9px">课程管理</div>
<div class="mi" style="top:232.2px">班级管理</div>
<div class="mgb" style="top:269.2px"></div>
<div class="mg" style="top:268.5px">教学任务</div>
<div class="mi" style="top:304.8px">课程设计</div>
<div class="mi" style="top:341.1px;color:#fff">课程题库</div>
<div class="mi" style="top:377.4px">作业考试</div>
<div class="mgb" style="top:414.4px"></div>
<div class="mg" style="top:413.7px">学情分析</div>
<div class="mi" style="top:450.0px">课程成绩</div>
<div class="mi" style="top:486.3px">统计分析</div>
<div class="abs" style="left:208.6px;top:364.6px;width:17px;height:33px;background:#fff;border:1px solid #e8e8e8;border-left:none;border-radius:0 4px 4px 0;box-shadow:1px 0 3px rgba(0,0,0,.06)"></div>
<svg class="abs" style="left:211.6px;top:374.6px" width="11" height="13" viewBox="0 0 11 13"><path d="M5.2 .8 L.9 6.5 L5.2 12.2 M10 .8 L5.7 6.5 L10 12.2" fill="none" stroke="#c4c4c4" stroke-width="1"/></svg>
<div class="abs" style="left:1219px;top:283px;width:30px;height:107px;background:linear-gradient(180deg,#fff 0,#fbfbff 75%,#dfe6ff 100%);border:1px solid #dfe2f6;border-radius:15px;overflow:hidden"><div class="abs" style="left:-4px;top:84px;width:40px;height:14px;border-radius:50%;background:rgba(120,200,250,.28)"></div><div class="abs" style="left:-2px;top:90px;width:34px;height:18px;border-radius:50%;background:rgba(150,160,250,.25)"></div></div>
<div class="abs" style="left:1219.2px;top:281.8px;width:30.2px;height:30.6px;border-radius:15.2px;background:radial-gradient(circle at 50% 30%,#fff 0,#f1f1f4 50%,#c9c9d2 100%)"></div>
<div class="abs" style="left:1222.6px;top:289.2px;width:23.4px;height:15.8px;border-radius:7.4px;background:linear-gradient(90deg,#7a3fc8 0,#141a3c 18%,#101838 82%,#2a7fe0 100%)"></div>
<div class="abs" style="left:1227px;top:293.6px;width:4.4px;height:6.6px;border-radius:2.2px;background:#fff;box-shadow:0 0 2px #9cc8ff"></div>
<div class="abs" style="left:1237px;top:293.6px;width:4.4px;height:6.6px;border-radius:2.2px;background:#fff;box-shadow:0 0 2px #9cc8ff"></div>
<svg class="abs" style="left:1228px;top:273px" width="12" height="11" viewBox="0 0 12 11"><circle cx="6" cy="6.6" r="2.4" fill="none" stroke="#d0d0d8" stroke-width=".8"/><path d="M6 .6 L6 2.6 M1.6 2.6 L3 4 M10.4 2.6 L9 4 M.6 7 L2.4 7 M11.4 7 L9.6 7" stroke="#d8d8e0" stroke-width=".7"/></svg>
<div class="t" style="left:1228px;top:318.6px;font-size:12.4px;font-weight:bold;color:#1e1e1e;width:12.4px;text-align:center;-webkit-text-stroke:.3px #1e1e1e">职</div>
<div class="t" style="left:1228px;top:334.1px;font-size:12.4px;font-weight:bold;color:#1e1e1e;width:12.4px;text-align:center;-webkit-text-stroke:.3px #1e1e1e">教</div>
<div class="t" style="left:1228px;top:349.5px;font-size:12.4px;font-weight:bold;color:#1e1e1e;width:12.4px;text-align:center;-webkit-text-stroke:.3px #1e1e1e">一</div>
<div class="t" style="left:1228px;top:365.0px;font-size:12.4px;font-weight:bold;color:#1e1e1e;width:12.4px;text-align:center;-webkit-text-stroke:.3px #1e1e1e">问</div>
<div class="abs" style="left:1215px;top:410.2px;width:35px;height:124px;background:#fff;border-radius:17.5px;box-shadow:0 0 5px rgba(0,0,0,.12)"></div>
<svg class="abs" style="left:1221.4px;top:426px" width="22.4" height="22.4" viewBox="0 0 20 20"><circle cx="10" cy="9.6" r="5.6" fill="#3a63ea"/><path d="M3.2 10.4 A6.8 6.8 0 0 1 16.8 10.4" fill="none" stroke="#3a63ea" stroke-width="1.5"/><rect x="1.8" y="8.6" width="2.8" height="5" rx="1.2" fill="#3a63ea"/><rect x="15.4" y="8.6" width="2.8" height="5" rx="1.2" fill="#3a63ea"/><path d="M4.6 7.6 C7 8.6 12 8.4 15.4 6.4 L15.4 10 C15.4 13.6 12.6 15 10 15 C7.4 15 4.6 13.6 4.6 10 Z" fill="#fff"/><path d="M7.4 11.2 Q10 13.2 12.6 11.2" fill="none" stroke="#3a63ea" stroke-width="1"/><path d="M16.6 13.4 Q16 17 11.4 17.2" fill="none" stroke="#3a63ea" stroke-width="1.1"/><ellipse cx="10.6" cy="17.2" rx="1.6" ry="1.1" fill="#3a63ea"/></svg>
<svg class="abs" style="left:1221.9px;top:463.4px" width="21.2" height="18" viewBox="0 0 20 17"><path d="M5.2 16 A4.7 4.7 0 0 1 4.4 6.7 A6 6 0 0 1 15.8 6.6 A4.8 4.8 0 0 1 15 16 Z" fill="#3a63ea"/><path d="M10 5.6 L10 12.6 M6.6 9.6 L10 13 L13.4 9.6" fill="none" stroke="#fff" stroke-width="2.2"/></svg>
<svg class="abs" style="left:1222.2px;top:497.4px" width="20.6" height="20.6" viewBox="0 0 18.6 18.6"><circle cx="9.3" cy="9.3" r="9.3" fill="#3a63ea"/><path d="M6.3 7.3 C6.3 3.5 12.4 3.5 12.4 7.1 C12.4 9.5 9.4 9.3 9.4 11.7" fill="none" stroke="#fff" stroke-width="2.1"/><circle cx="9.4" cy="14.6" r="1.25" fill="#fff"/></svg>
<svg class="abs" style="left:1226px;top:540.2px" width="13.2" height="13.2" viewBox="0 0 13.2 13.2"><circle cx="6.6" cy="6.6" r="6" fill="#fff" stroke="#888" stroke-width=".9"/><path d="M4.4 4.4 L8.8 8.8 M8.8 4.4 L4.4 8.8" stroke="#777" stroke-width="1"/></svg>
<svg class="abs" style="left:0;top:0;pointer-events:none" width="1267" height="602" viewBox="0 0 1267 602">
<rect x="794.5" y="104.2" width="117.4" height="47.9" rx="2" fill="none" stroke="#fb1a17" stroke-width="2.5"/>
<rect x="84.3" y="328.3" width="80.4" height="38.6" rx="2.2" fill="none" stroke="#fb1a17" stroke-width="2.3"/>
<defs><linearGradient id="ag" gradientUnits="userSpaceOnUse" x1="153" y1="345" x2="815" y2="134"><stop offset="0" stop-color="#fb1a17" stop-opacity=".15"/><stop offset=".05" stop-color="#fb1a17" stop-opacity=".7"/><stop offset=".12" stop-color="#fb1a17" stop-opacity="1"/><stop offset="1" stop-color="#fb1a17"/></linearGradient></defs>
<path d="M153.5 344.6 L804.5 134.7 L803.9 131.4 L815.4 133.9 L808 142.2 L806.9 139.1 L153.7 345 Z" fill="url(#ag)"/>
</svg>
<div class="abs" style="left:1260px;top:0;width:7px;height:602px;background:#fff"></div>
<div class="abs" style="left:1260.3px;top:5px;width:6.7px;height:588px;background:#c1c1c1;border-radius:3.3px"></div>
<div class="abs" style="left:0;top:595px;width:1260px;height:7px;background:#fff"></div>
<div class="abs" style="left:394.2px;top:595.4px;width:865.2px;height:6.6px;background:#c1c1c1;border-radius:3.3px"></div>
<div class="abs" style="left:0;top:0;width:1267px;height:1px;background:rgba(245,222,228,.82)"></div>
</div></body></html>
